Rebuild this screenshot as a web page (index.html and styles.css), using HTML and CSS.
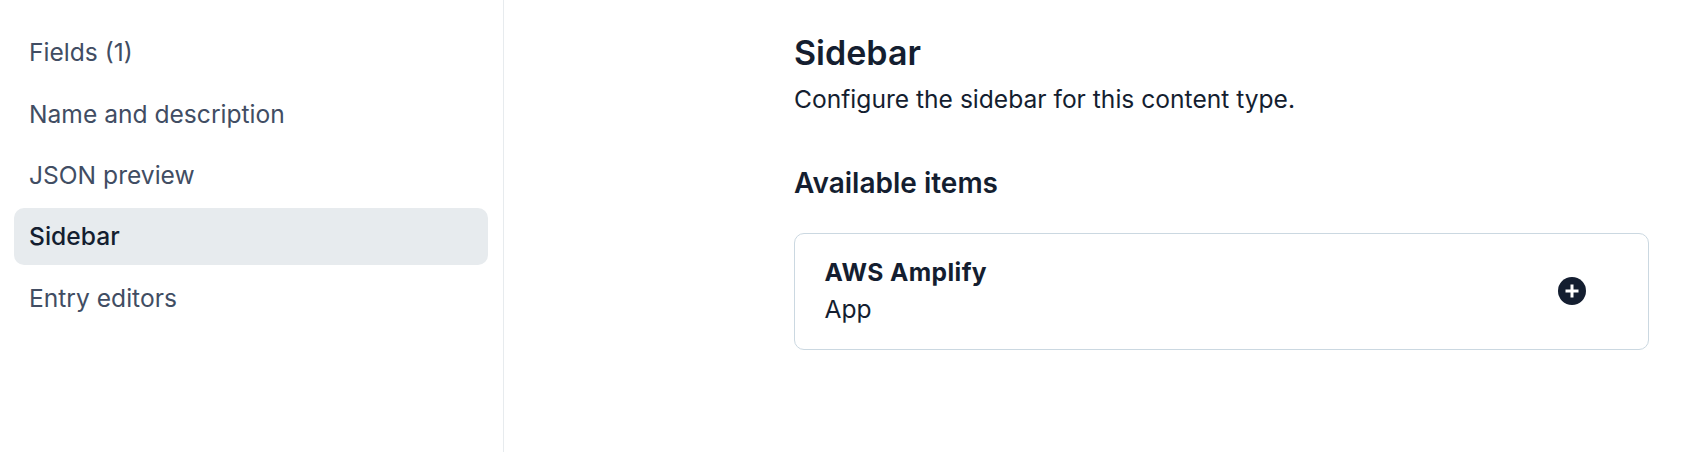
FILE: index.html
```html
<!DOCTYPE html>
<html lang="en">
<head>
<meta charset="utf-8">
<title>Sidebar</title>
<link rel="stylesheet" href="styles.css">
</head>
<body>
<div class="page">
  <nav class="side">
    <a class="item">Fields (1)</a>
    <a class="item">Name and description</a>
    <a class="item">JSON preview</a>
    <a class="item active">Sidebar</a>
    <a class="item">Entry editors</a>
  </nav>
  <main class="main">
    <h1 class="title">Sidebar</h1>
    <p class="desc">Configure the sidebar for this content type.</p>
    <h2 class="subtitle">Available items</h2>
    <div class="card">
      <div class="card-text">
        <div class="card-name">AWS Amplify</div>
        <div class="card-type">App</div>
      </div>
      <svg class="add" viewBox="0 0 28 28" aria-hidden="true">
        <circle cx="14" cy="14" r="14" fill="#141e30"/>
        <path d="M14 7.5v13M7.5 14h13" stroke="#fff" stroke-width="3" fill="none"/>
      </svg>
    </div>
  </main>
</div>
</body>
</html>
```
FILE: styles.css
```css
* { box-sizing: border-box; }
html, body { margin: 0; padding: 0; background: #fff; }
body { font-family: Inter, "Liberation Sans", sans-serif; color: #141e30; }
.page { display: flex; width: 1696px; height: 452px; overflow: hidden; }
.side {
  width: 504px;
  flex: none;
  border-right: 1px solid #e7ebee;
  padding: 23.5px 15px 0 14px;
  display: flex;
  flex-direction: column;
  gap: 4px;
}
.item {
  display: flex;
  align-items: center;
  height: 57.4px;
  padding-left: 15px;
  border-radius: 10px;
  font-size: 24.6px;
  color: #414d63;
}
.item.active { background: #e7ebee; color: #141e30; font-weight: 500; }
.main { flex: 1; padding: 31px 47px 0 290px; }
.title { margin: 0; font-size: 34px; line-height: 44px; font-weight: 600; }
.desc { margin: 2px 0 0; font-size: 24.6px; line-height: 44px; }
.subtitle { margin: 42.5px 0 0; font-size: 28px; line-height: 38px; font-weight: 600; }
.card {
  margin-top: 31px;
  height: 117px;
  border: 1px solid #cbd8e1;
  border-radius: 10px;
  padding: 0 62px 0 29.5px;
  display: flex;
  align-items: center;
  justify-content: space-between;
}
.card-name { font-size: 24.6px; line-height: 37px; font-weight: 700; letter-spacing: 0.4px; }
.card-type { font-size: 24.6px; line-height: 37px; }
.add { width: 28px; height: 28px; flex: none; }
```
